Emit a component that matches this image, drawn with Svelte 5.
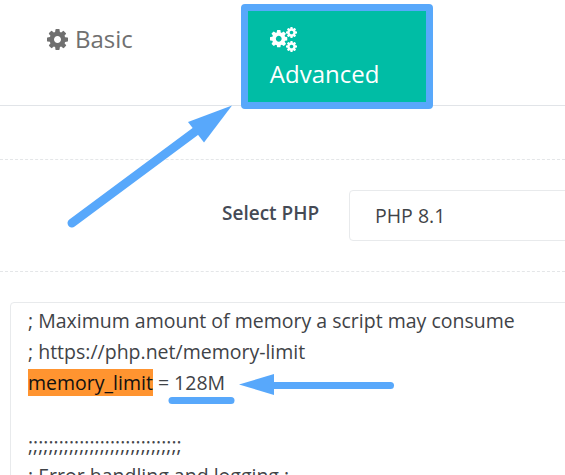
<script lang="ts">
	const cog = 'M1152 896q0-106-75-181t-181-75-181 75-75 181 75 181 181 75 181-75 75-181zm512-109v222q0 12-8 23t-20 13l-185 28q-19 54-39 91 35 50 107 138 10 12 10 25t-9 23q-27 37-99 108t-94 71q-12 0-26-9l-138-108q-44 23-91 38-16 136-29 186-7 28-36 28h-222q-14 0-24.500-8.500t-11.500-21.500l-28-184q-49-16-90-37l-141 107q-10 9-25 9-14 0-25-11-126-114-165-168-7-10-7-23 0-12 8-23 15-21 51-66.500t54-70.500q-27-50-41-99l-183-27q-13-2-21-12.500t-8-23.500v-222q0-12 8-23t19-13l186-28q14-46 39-92-40-57-107-138-10-12-10-24 0-10 9-23 26-36 98.500-107.500t94.500-71.500q13 0 26 10l138 107q44-23 91-38 16-136 29-186 7-28 36-28h222q14 0 24.500 8.500t11.500 21.500l28 184q49 16 90 37l142-107q9-9 24-9 13 0 25 10 129 119 165 170 7 8 7 22 0 12-8 23-15 21-51 66.500t-54 70.500q26 50 41 98l183 28q13 2 21 12.500t8 23.500z';
</script>

<section class="page">
	<nav class="tabs">
		<div class="tab">
			<svg class="icon" viewBox="128 128 1536 1536" fill="currentColor"><path d={cog} /></svg>
			<span>Basic</span>
		</div>
		<div class="tab active">
			<svg class="icon-cogs" viewBox="0 0 27 25" fill="currentColor">
				<svg x="0" y="3" width="17.500" height="17.500" viewBox="128 128 1536 1536"><path d={cog} /></svg>
				<svg x="16" y="0" width="11" height="11" viewBox="128 128 1536 1536"><path d={cog} /></svg>
				<svg x="16" y="14" width="11" height="11" viewBox="128 128 1536 1536"><path d={cog} /></svg>
			</svg>
			<span>Advanced</span>
		</div>
	</nav>

	<div class="php-row">
		<span class="php-label">Select PHP</span>
		<div class="php-select">PHP 8.1</div>
	</div>

	<div class="editor">
		<div>; Maximum amount of memory a script may consume</div>
		<div>; https://php.net/memory-limit</div>
		<div><mark>memory_limit</mark> = 128M</div>
		<div>&nbsp;</div>
		<div>;;;;;;;;;;;;;;;;;;;;;;;;;;;;;;</div>
		<div>; Error handling and logging ;</div>
	</div>

	<svg class="notes" viewBox="0 0 565 475" fill="#58a8fb" stroke="none">
		<path d="M72 223 L200 128" stroke="#58a8fb" stroke-width="9" stroke-linecap="round" />
		<path d="M232 105.500 L188 122 L204 142.500 Z" />
		<path d="M239 384.500 L274 374 L274 395 Z" />
		<path d="M272 385.500 L390.500 385.500" stroke="#58a8fb" stroke-width="7" stroke-linecap="round" />
		<path d="M172 400.500 L231 400.500" stroke="#58a8fb" stroke-width="7" stroke-linecap="round" />
	</svg>
</section>

<style>
	:global(body) {
		margin: 0;
		background: #fff;
	}

	.page {
		position: relative;
		width: 565px;
		height: 475px;
		overflow: hidden;
		font-family: "Open Sans", sans-serif;
		color: #3f4347;
		background: #fff;
	}

	.tabs {
		display: flex;
		align-items: flex-start;
		height: 105px;
		padding-left: 47px;
		border-bottom: 1px solid #e1e4e8;
	}

	.tab {
		display: flex;
		align-items: center;
		gap: 7px;
		margin-top: 24px;
		font-size: 24px;
		line-height: 30px;
		color: #707070;
	}

	.icon {
		width: 21px;
		height: 21px;
	}

	.tab.active {
		flex-direction: column;
		align-items: flex-start;
		gap: 0;
		width: 192px;
		height: 105px;
		box-sizing: border-box;
		margin: 4px 0 0 108px;
		padding: 16px 0 0 22px;
		border: 7px solid #58a8fb;
		border-radius: 4px;
		background: #00bda5;
		color: #fff;
	}

	.icon-cogs {
		width: 27px;
		height: 25px;
		margin-bottom: 7px;
	}

	.php-row {
		display: flex;
		align-items: center;
		height: 111px;
		margin-top: 53px;
		padding-left: 222px;
		border-top: 1px dashed #e4e6e8;
		border-bottom: 1px dashed #e4e6e8;
	}

	.php-label {
		flex: none;
		width: 127px;
		margin-top: -5px;
		font-size: 19px;
		font-weight: 600;
		color: #454a55;
		white-space: nowrap;
	}

	.php-select {
		flex: none;
		width: 260px;
		height: 51px;
		padding-left: 25px;
		box-sizing: border-box;
		border: 1px solid #e8eaec;
		border-radius: 4px;
		font-size: 19.500px;
		line-height: 49px;
	}

	.editor {
		width: 600px;
		height: 200px;
		box-sizing: border-box;
		margin: 30px 0 0 10px;
		padding: 2px 0 0 17px;
		border: 1px solid #e8eaec;
		border-radius: 4px;
		font-size: 19.500px;
		line-height: 31px;
		white-space: nowrap;
	}

	mark {
		background: #ff9430;
		color: #111;
	}

	.notes {
		position: absolute;
		inset: 0;
		width: 565px;
		height: 475px;
		pointer-events: none;
	}
</style>
